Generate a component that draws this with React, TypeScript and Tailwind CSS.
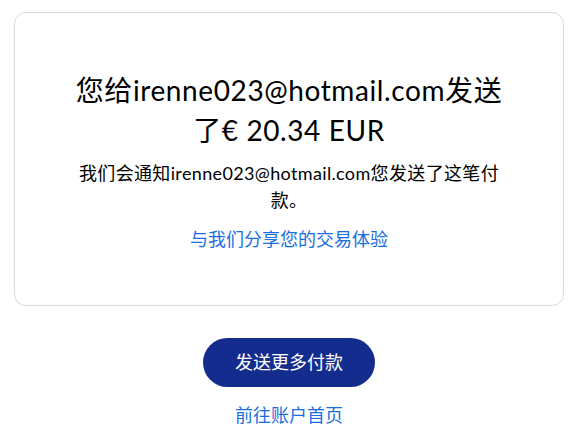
import React from "react";

export default function App() {
  const font = { fontFamily: '"Lato", "Noto Sans CJK SC", sans-serif' };
  return (
    <div className="min-h-[446px] bg-white pt-[12px] pl-[14px] pr-[9px]" style={font}>
      <div className="flex flex-col items-center rounded-[12px] border border-[#dcdad2] px-[48px] pt-[57px] pb-[52px]">
        <h1 className="w-[440px] text-center text-[28px] leading-[40px] font-normal tracking-[0.6px] text-black">
          您给irenne023@hotmail.com发送了€ 20.34 EUR
        </h1>
        <p className="mt-[10px] w-[440px] text-center text-[18px] leading-[27px] tracking-[0.35px] text-black">
          我们会通知irenne023@hotmail.com您发送了这笔付款。
        </p>
        <a className="mt-[12px] text-center text-[18px] leading-[27px] text-[#1a6fe0]" href="#">
          与我们分享您的交易体验
        </a>
      </div>
      <div className="flex flex-col items-center pt-[32px]">
        <button className="h-[49px] rounded-full bg-[#142c8e] px-[32px] text-[18px] text-white">
          发送更多付款
        </button>
        <a className="mt-[15px] text-[18px] leading-[27px] text-[#1a6fe0]" href="#">
          前往账户首页
        </a>
      </div>
    </div>
  );
}
